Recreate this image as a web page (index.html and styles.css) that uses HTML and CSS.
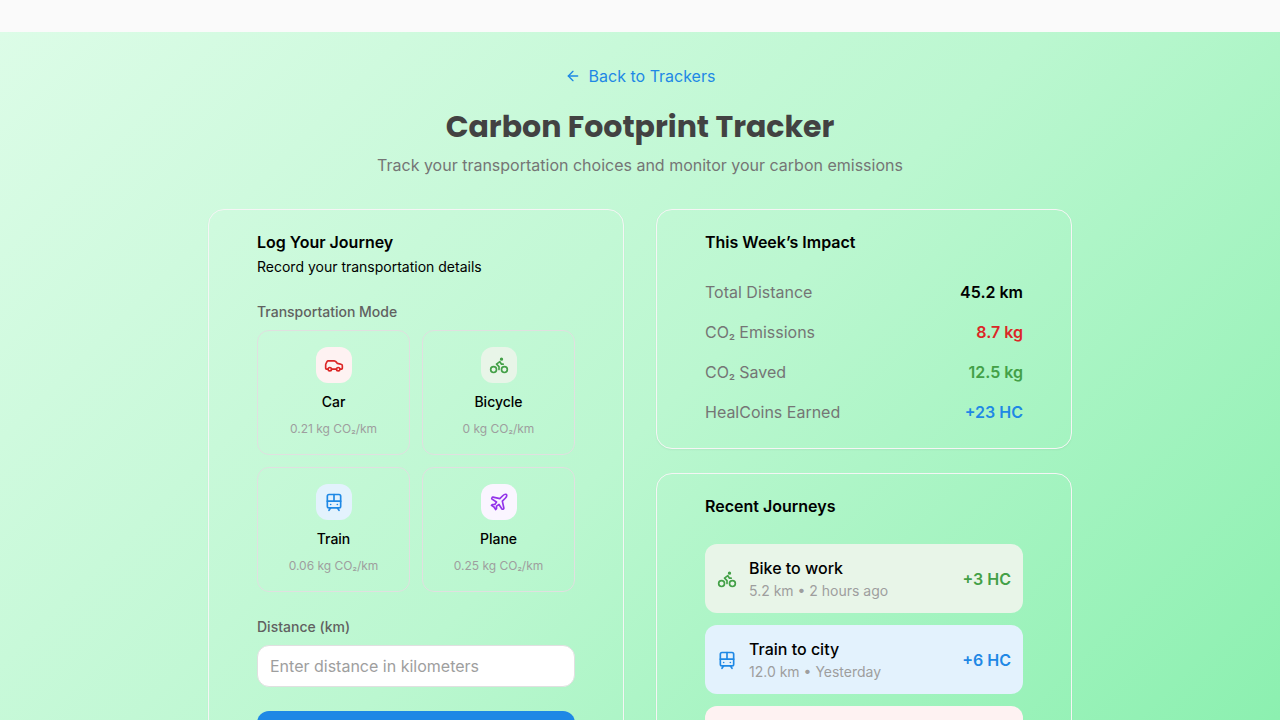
FILE: index.html
```html
<!DOCTYPE html>
<html lang="en">
<head>
<meta charset="utf-8">
<title>Carbon Footprint Tracker</title>
<link rel="stylesheet" href="styles.css">
</head>
<body>
<svg class="sprite" aria-hidden="true">
  <symbol id="car" viewBox="0 0 24 24"><path d="M19 17h2c.6 0 1-.4 1-1v-3c0-.9-.7-1.7-1.5-1.9C18.7 10.6 16 10 16 10s-1.3-1.4-2.2-2.3c-.5-.4-1.1-.7-1.8-.7H5c-.6 0-1.1.4-1.4.9l-1.4 2.9A3.7 3.7 0 0 0 2 12v4c0 .6.4 1 1 1h2"/><circle cx="7" cy="17" r="2"/><path d="M9 17h6"/><circle cx="17" cy="17" r="2"/></symbol>
  <symbol id="bike" viewBox="0 0 24 24"><circle cx="18.5" cy="17.5" r="3.5"/><circle cx="5.5" cy="17.5" r="3.5"/><circle cx="15" cy="5" r="1"/><path d="M12 17.5V14l-3-3 4-3 2 3h2"/></symbol>
  <symbol id="train" viewBox="0 0 24 24"><rect width="16" height="16" x="4" y="3" rx="2"/><path d="M4 11h16"/><path d="M12 3v8"/><path d="m8 19-2 3"/><path d="m18 22-2-3"/><path d="M8 15h.01"/><path d="M16 15h.01"/></symbol>
  <symbol id="plane" viewBox="0 0 24 24"><path d="M17.8 19.2 16 11l3.5-3.5C21 6 21.5 4 21 3c-1-.5-3 0-4.5 1.5L13 8 4.8 6.2c-.5-.1-.9.1-1.1.5l-.3.5c-.2.5-.1 1 .3 1.3L9 12l-2 3H4l-1 1 3 2 2 3 1-1v-3l3-2 3.5 5.3c.3.4.8.5 1.3.4l.5-.2c.4-.3.6-.7.5-1.2z"/></symbol>
  <symbol id="arrow" viewBox="0 0 24 24"><path d="m12 19-7-7 7-7"/><path d="M19 12H5"/></symbol>
</svg>
<main class="page">
  <div class="container">
    <header class="intro">
      <a class="back"><svg class="icon icon-sm"><use href="#arrow"/></svg>Back to Trackers</a>
      <h1 class="title">Carbon Footprint Tracker</h1>
      <p class="subtitle">Track your transportation choices and monitor your carbon emissions</p>
    </header>
    <div class="columns">
      <section class="card">
        <h2 class="card-title">Log Your Journey</h2>
        <p class="card-desc">Record your transportation details</p>
        <div class="label mode-label">Transportation Mode</div>
        <div class="modes">
          <button class="mode"><span class="badge red"><svg class="icon"><use href="#car"/></svg></span><span class="mode-name">Car</span><span class="mode-rate">0.21 kg CO<span class="low">₂</span>/km</span></button>
          <button class="mode"><span class="badge green"><svg class="icon"><use href="#bike"/></svg></span><span class="mode-name">Bicycle</span><span class="mode-rate">0 kg CO<span class="low">₂</span>/km</span></button>
          <button class="mode"><span class="badge blue"><svg class="icon"><use href="#train"/></svg></span><span class="mode-name">Train</span><span class="mode-rate">0.06 kg CO<span class="low">₂</span>/km</span></button>
          <button class="mode"><span class="badge purple"><svg class="icon"><use href="#plane"/></svg></span><span class="mode-name">Plane</span><span class="mode-rate">0.25 kg CO<span class="low">₂</span>/km</span></button>
        </div>
        <label class="label distance-label" for="distance">Distance (km)</label>
        <input class="input" id="distance" type="text" placeholder="Enter distance in kilometers">
        <button class="submit" aria-label="Log Journey"></button>
      </section>
      <div class="side">
        <section class="card">
          <h2 class="card-title">This Week’s Impact</h2>
          <dl class="stats">
            <div class="stat"><dt>Total Distance</dt><dd>45.2 km</dd></div>
            <div class="stat"><dt>CO<span class="low">₂</span> Emissions</dt><dd class="text-red">8.7 kg</dd></div>
            <div class="stat"><dt>CO<span class="low">₂</span> Saved</dt><dd class="text-green">12.5 kg</dd></div>
            <div class="stat"><dt>HealCoins Earned</dt><dd class="text-blue">+23 HC</dd></div>
          </dl>
        </section>
        <section class="card">
          <h2 class="card-title">Recent Journeys</h2>
          <div class="journeys">
            <div class="journey green"><svg class="icon"><use href="#bike"/></svg><div class="details"><p class="name">Bike to work</p><p class="meta">5.2 km • 2 hours ago</p></div><span class="coins">+3 HC</span></div>
            <div class="journey blue"><svg class="icon"><use href="#train"/></svg><div class="details"><p class="name">Train to city</p><p class="meta">12.0 km • Yesterday</p></div><span class="coins">+6 HC</span></div>
            <div class="journey red"></div>
          </div>
        </section>
      </div>
    </div>
  </div>
</main>
</body>
</html>
```
FILE: styles.css
```css
* { box-sizing: border-box; margin: 0; padding: 0; }
html { scrollbar-width: none; }
body { background: #fafafa; padding-top: 32px; font-family: Inter, "Liberation Sans", sans-serif; font-size: 16px; line-height: 24px; color: #000; }
button, input { font: inherit; color: inherit; }
.sprite { display: none; }
.icon { width: 20px; height: 20px; flex: none; fill: none; stroke: currentColor; stroke-width: 2; stroke-linecap: round; stroke-linejoin: round; }
.icon-sm { width: 16px; height: 16px; }
.page { min-height: 720px; padding: 32px 0; background: linear-gradient(135deg, #dcfce7, #bbf7d0, #86efac); }
.container { max-width: 896px; margin: 0 auto; padding: 0 16px; }
.intro { display: flex; flex-direction: column; align-items: center; margin-bottom: 32px; text-align: center; }
.back { display: inline-flex; align-items: center; gap: 8px; margin-bottom: 20px; color: #1e88e5; }
.title { margin-bottom: 8px; font-family: Poppins, Inter, sans-serif; font-size: 30px; font-weight: 700; line-height: 37px; color: #424242; white-space: nowrap; }
.subtitle { color: #757575; }
.columns { display: grid; grid-template-columns: 1fr 1fr; gap: 32px; }
.side { display: flex; flex-direction: column; gap: 24px; }
.card { padding: 20px 48px 24px; border: 1px solid #f5f5f5; border-radius: 16px; box-shadow: 0 1px 2px rgba(0, 0, 0, .05); }
.card-title { font-size: 16px; font-weight: 600; line-height: 24px; }
.card-desc { margin-top: 3px; font-size: 14px; line-height: 20px; }
.label { display: block; font-size: 14px; font-weight: 500; line-height: 20px; color: #616161; }
.mode-label { margin: 25px 0 8px; }
.modes { display: grid; grid-template-columns: 1fr 1fr; gap: 12px; }
.mode { display: flex; flex-direction: column; align-items: center; height: 125px; padding: 16px; border: 1px solid #e0e0e0; border-radius: 12px; background: none; }
.badge { display: flex; padding: 8px; margin-bottom: 8px; border-radius: 12px; }
.mode-name { margin-bottom: 8px; font-size: 14px; font-weight: 500; line-height: 21px; }
.mode-rate { font-size: 12px; line-height: 18px; color: #9e9e9e; }
.low { font-family: Roboto, sans-serif; line-height: 1; vertical-align: 1px; }
.red { background: #fef2f2; color: #dc2626; }
.green { background: #e8f5e8; color: #43a047; }
.blue { background: #e3f2fd; color: #1e88e5; }
.purple { background: #faf5ff; color: #9333ea; }
.mode-name, .name { color: #000; }
.distance-label { margin: 25px 0 8px; }
.input { display: block; width: 100%; height: 42px; padding: 8px 12px; border: 1px solid #e0e0e0; border-radius: 12px; background: #fff; }
.input::placeholder { color: #9e9e9e; opacity: 1; }
.submit { width: 100%; height: 44px; margin-top: 24px; border: 0; border-radius: 12px; background: #1e88e5; color: #fff; font-weight: 500; }
.stats { display: flex; flex-direction: column; gap: 16px; margin-top: 26px; }
.stat { display: flex; justify-content: space-between; }
.stat dt { color: #757575; }
.stat dd { font-weight: 600; }
.text-red { color: #dc2626; }
.text-green { color: #43a047; }
.text-blue { color: #1e88e5; }
.journeys { display: flex; flex-direction: column; gap: 12px; margin-top: 26px; }
.journey { display: flex; align-items: center; gap: 12px; height: 69px; padding: 12px; border-radius: 12px; }
.details { flex: 1; }
.name { font-weight: 500; line-height: 24px; }
.meta { font-size: 14px; line-height: 21px; color: #9e9e9e; }
.coins { font-weight: 600; }
```
